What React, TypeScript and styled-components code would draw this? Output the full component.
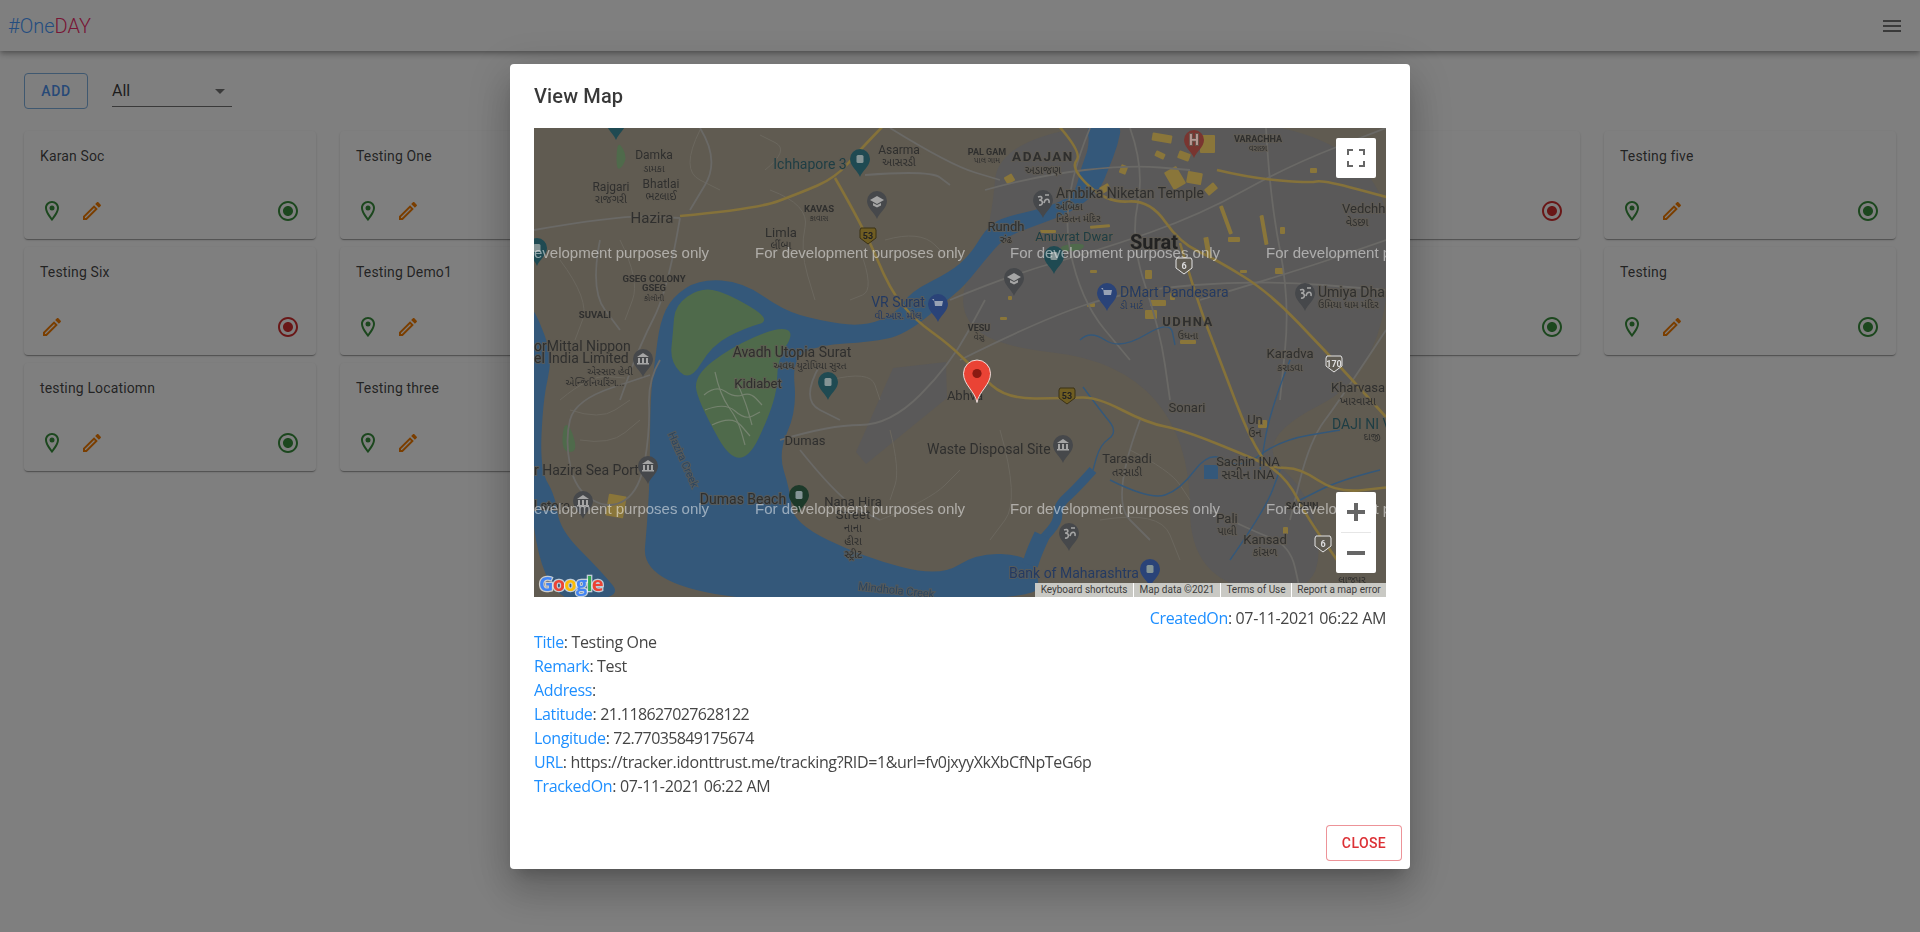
import * as React from "react"
import styled, { createGlobalStyle } from "styled-components"

const GlobalStyle = createGlobalStyle`
  html, body {
    margin: 0;
    height: 100%;
    overflow: hidden;
    background: #fff;
    font-family: Roboto, "Liberation Sans", sans-serif;
  }
  * {
    box-sizing: border-box;
  }
`

const AppBar = styled.header`
  height: 51px;
  display: flex;
  align-items: center;
  justify-content: space-between;
  padding: 0 16px 0 8px;
  background: #fff;
  box-shadow: 0 2px 4px -1px rgba(0, 0, 0, 0.2), 0 4px 5px 0 rgba(0, 0, 0, 0.14),
    0 1px 10px 0 rgba(0, 0, 0, 0.12);
`

const Logo = styled.div`
  font-size: 20px;
  font-weight: 300;
  color: #4a9bff;
  span {
    color: #f02d6a;
  }
`

const Main = styled.main`
  padding: 22px 24px;
`

const Toolbar = styled.div`
  display: flex;
  align-items: center;
  gap: 24px;
  margin-bottom: 22px;
`

const AddButton = styled.button`
  width: 64px;
  height: 36px;
  border: 1px solid #7fb0e0;
  border-radius: 4px;
  background: transparent;
  color: #4f93ee;
  font-family: Roboto, sans-serif;
  font-size: 14px;
  font-weight: 500;
  letter-spacing: 0.6px;
`

const SelectBox = styled.div`
  position: relative;
  width: 120px;
  height: 32px;
  display: flex;
  align-items: center;
  font-size: 16px;
  color: rgba(0, 0, 0, 0.78);
  border-bottom: 1px solid rgba(0, 0, 0, 0.55);
  svg {
    position: absolute;
    right: 0;
    top: 4px;
    fill: rgba(0, 0, 0, 0.54);
  }
`

const CardGrid = styled.div`
  display: grid;
  grid-template-columns: repeat(6, 292px);
  gap: 8px 24px;
`

const Card = styled.div`
  height: 108px;
  padding: 16px;
  display: flex;
  flex-direction: column;
  justify-content: space-between;
  background: #fff;
  border-radius: 4px;
  box-shadow: 0 2px 1px -1px rgba(0, 0, 0, 0.2), 0 1px 1px 0 rgba(0, 0, 0, 0.14),
    0 1px 3px 0 rgba(0, 0, 0, 0.12);
`

const CardTitle = styled.div`
  font-size: 14px;
  line-height: 18px;
  height: 20px;
  letter-spacing: 0.14px;
  color: rgba(0, 0, 0, 0.74);
`

const CardActions = styled.div`
  display: flex;
  align-items: center;
  gap: 16px;
  height: 24px;
`

const Status = styled.span`
  margin-left: auto;
  height: 24px;
`

const Icon = styled.svg<{ $color: string }>`
  display: block;
  width: 24px;
  height: 24px;
  fill: ${p => p.$color};
`

const Overlay = styled.div`
  position: fixed;
  inset: 0;
  display: flex;
  align-items: center;
  justify-content: center;
  padding-top: 1px;
  background: rgba(0, 0, 0, 0.5);
`

const Dialog = styled.div`
  width: 900px;
  background: #fff;
  border-radius: 4px;
  box-shadow: 0 11px 15px -7px rgba(0, 0, 0, 0.2),
    0 24px 38px 3px rgba(0, 0, 0, 0.14), 0 9px 46px 8px rgba(0, 0, 0, 0.12);
`

const DialogTitle = styled.h2`
  margin: 0;
  padding: 16px 24px;
  font-size: 20px;
  font-weight: 500;
  line-height: 32px;
  letter-spacing: 0.15px;
  color: rgba(0, 0, 0, 0.78);
`

const DialogContent = styled.div`
  padding: 0 24px 19px;
`

const MapFrame = styled.div`
  position: relative;
  height: 469px;
  overflow: hidden;
  svg {
    display: block;
  }
`

const MapButton = styled.button`
  position: absolute;
  right: 10px;
  top: 10px;
  width: 40px;
  height: 40px;
  padding: 0;
  border: 0;
  border-radius: 2px;
  background: #fff;
  display: flex;
  align-items: center;
  justify-content: center;
`

const ZoomBox = styled.div`
  position: absolute;
  right: 10px;
  bottom: 24px;
  width: 40px;
  height: 81px;
  background: #fff;
  border-radius: 2px;
  display: flex;
  flex-direction: column;
  align-items: center;
  justify-content: space-between;
  padding: 11px 0;
  hr {
    width: 30px;
    margin: 0;
    border: 0;
    border-top: 1px solid #e6e6e6;
  }
`

const CreditBar = styled.div`
  position: absolute;
  right: 0;
  bottom: 0;
  height: 14px;
  display: flex;
  background: #c9c9c4;
`

const Credit = styled.span<{ $w: number }>`
  width: ${p => p.$w}px;
  font-family: Roboto, sans-serif;
  font-size: 10px;
  line-height: 14px;
  text-align: center;
  color: #3c3c3c;
  white-space: nowrap;
  & + & {
    border-left: 1px solid #fff;
  }
`

const Details = styled.div`
  font-family: "Open Sans", sans-serif;
  font-size: 16px;
  line-height: 24px;
  letter-spacing: -0.35px;
  color: #454545;
`

const CreatedRow = styled.div`
  margin-top: 9px;
  text-align: right;
`

const Key = styled.span`
  color: #1e8fff;
`

const Value = styled.span<{ $tight?: boolean }>`
  letter-spacing: ${p => (p.$tight ? "-0.6px" : "inherit")};
`

const DialogActions = styled.div`
  display: flex;
  justify-content: flex-end;
  padding: 8px;
`

const CloseButton = styled.button`
  width: 76px;
  height: 36px;
  border: 1px solid rgba(220, 40, 50, 0.5);
  border-radius: 4px;
  background: #fff;
  color: #dc3035;
  font-family: Roboto, sans-serif;
  font-size: 14px;
  font-weight: 500;
  letter-spacing: 0.4px;
`

const MapText = styled.text<{ $size: number; $weight?: number; $color?: string; $ls?: number }>`
  font-family: Roboto, "Noto Sans Gujarati", "Noto Sans", sans-serif;
  font-size: ${p => p.$size}px;
  font-weight: ${p => p.$weight || 400};
  letter-spacing: ${p => p.$ls || 0}px;
  fill: ${p => p.$color || "#2f2f2e"};
  stroke: rgba(96, 91, 81, 0.75);
  stroke-width: 2px;
  paint-order: stroke;
`

const Watermark = styled.text`
  font-family: "Liberation Sans", Arial, sans-serif;
  font-size: 15px;
  fill: rgba(255, 255, 255, 0.5);
`

const GoogleMark = styled.text`
  font-family: "Open Sans", Roboto, sans-serif;
  font-size: 20px;
  font-weight: 700;
  letter-spacing: -0.8px;
  stroke: rgba(255, 255, 255, 0.7);
  stroke-width: 2.5px;
  paint-order: stroke;
`

const smooth = (pts: number[][], closed = true) => {
  const mid = (a: number[], b: number[]) => [(a[0] + b[0]) / 2, (a[1] + b[1]) / 2]
  if (closed) {
    let d = ""
    pts.forEach((p, i) => {
      const next = pts[(i + 1) % pts.length]
      const m = mid(p, next)
      if (i === 0) d += `M${mid(pts[pts.length - 1], p).join(" ")} `
      d += `Q${p.join(" ")} ${m.join(" ")} `
    })
    return d + "Z"
  }
  let d = `M${pts[0].join(" ")} `
  for (let i = 1; i < pts.length - 1; i++) {
    d += `Q${pts[i].join(" ")} ${mid(pts[i], pts[i + 1]).join(" ")} `
  }
  return d + `L${pts[pts.length - 1].join(" ")}`
}

const LAND = "#605b51"
const WATER = "#34587a"
const GREEN = "#4f6a4b"
const URBAN = "#5a5959"
const HIGHWAY = "#85723a"
const PATCH = "#8a763a"
const STREET = "#6a6966"
const TRACK = "#6b675e"

const waterAreas = [
  [[534, 310], [545, 335], [552, 360], [543, 400], [540, 470], [555, 495], [560, 530], [600, 570], [625, 600], [530, 600], [530, 310]],
  [
    [660, 322], [672, 297], [700, 279], [743, 282], [783, 310], [817, 320], [863, 327], [897, 313], [910, 292],
    [950, 272], [970, 255], [985, 230], [1000, 218], [1045, 208], [1075, 195], [1080, 170], [1090, 145], [1086, 122],
    [1122, 122], [1118, 145], [1108, 170], [1100, 190], [1072, 212], [1040, 224], [1005, 237], [985, 260], [965, 285],
    [950, 298], [905, 335], [870, 342], [820, 345], [792, 358], [797, 410], [778, 453], [790, 490], [793, 523],
    [863, 557], [940, 577], [977, 553], [1025, 555], [1040, 575], [1035, 602], [640, 602], [650, 493], [650, 400], [655, 360],
  ],
]

const greenAreas = [
  [[673, 332], [675, 305], [700, 288], [725, 292], [773, 320], [745, 328], [712, 345], [690, 382], [670, 362]],
  [[730, 348], [777, 327], [795, 332], [777, 360], [777, 400], [740, 477], [697, 400], [695, 375]],
  [[563, 425], [570, 425], [578, 452], [562, 452]],
  [[618, 140], [628, 158], [618, 172], [616, 160]],
]

const urbanAreas = [
  [[1000, 120], [1390, 120], [1390, 370], [1250, 440], [1317, 500], [1320, 600], [1190, 580], [1190, 440], [1120, 360], [985, 345], [955, 300], [990, 240]],
]

// the airstrip is a hard edged block, not a blob
const AIRSTRIP = "M893 368L946 362L947 398L866 464L856 452Z"

const islandTracks = [
  [[704, 395], [716, 385], [735, 398], [750, 392], [762, 405]],
  [[705, 410], [725, 402], [745, 420], [760, 412]],
  [[712, 425], [732, 415], [750, 436]],
  [[715, 372], [720, 395], [738, 420], [745, 445]],
  [[735, 378], [745, 400], [752, 425]],
]

const highways = [
  [[680, 216], [757, 209], [800, 193], [835, 178], [860, 150], [885, 124]],
  [[835, 178], [865, 230], [890, 290], [915, 320], [950, 345], [977, 372], [1007, 399], [1067, 398], [1097, 397], [1147, 423], [1183, 430], [1250, 457], [1273, 468], [1300, 468], [1337, 493], [1390, 487]],
  [[1057, 124], [1083, 153], [1070, 168], [1107, 203], [1150, 200], [1180, 243], [1217, 260], [1270, 293], [1327, 353], [1345, 372], [1386, 417]],
  [[1217, 170], [1250, 178], [1310, 183], [1323, 180], [1390, 198]],
  [[1180, 243], [1197, 300], [1217, 353], [1257, 457], [1288, 480], [1307, 517], [1337, 560]],
]

const streets = [
  [[534, 230], [620, 215], [680, 218]],
  [[680, 218], [668, 290], [640, 345], [620, 400]],
  [[600, 240], [590, 290], [620, 330]],
  [[660, 360], [648, 380], [650, 430], [640, 490], [610, 510], [575, 490], [565, 440], [575, 400], [650, 375]],
  [[950, 300], [1010, 275], [1100, 250], [1200, 215], [1290, 165], [1386, 128]],
  [[960, 360], [1040, 320], [1130, 290], [1260, 280], [1386, 290]],
  [[985, 190], [1040, 175], [1130, 165], [1190, 170]],
  [[1090, 128], [1060, 200], [1080, 300], [1130, 360]],
  [[1130, 128], [1145, 170], [1130, 240], [1160, 330], [1170, 400]],
  [[1266, 128], [1270, 200], [1290, 300], [1280, 400]],
  [[1200, 300], [1300, 270], [1386, 240]],
  [[1386, 330], [1340, 400], [1310, 440], [1290, 520]],
  [[780, 440], [830, 425], [890, 425], [950, 365], [985, 300]],
  [[800, 450], [840, 500], [880, 520]],
  [[820, 365], [800, 400], [840, 420]],
  [[1210, 510], [1250, 530], [1290, 545], [1300, 590]],
  [[1140, 420], [1110, 500], [1150, 540]],
  [[890, 128], [950, 165], [1000, 180]],
  [[700, 128], [720, 160], [690, 210]],
  [[865, 175], [930, 170], [950, 185]],
]

const tracks = [
  [[560, 260], [590, 300], [575, 340]],
  [[620, 240], [640, 280], [625, 320]],
  [[700, 130], [680, 170], [720, 190]],
  [[765, 170], [790, 150], [760, 135]],
  [[770, 190], [810, 205], [800, 250], [815, 300]],
  [[860, 250], [875, 290], [850, 300]],
  [[885, 240], [920, 230], [950, 260]],
  [[570, 410], [600, 420], [630, 400]],
  [[580, 440], [610, 445], [640, 420]],
  [[560, 400], [590, 375], [625, 378]],
  [[830, 380], [870, 370], [880, 400]],
  [[890, 430], [900, 470], [890, 500]],
  [[880, 520], [930, 500], [960, 470]],
  [[1000, 430], [1020, 500], [990, 540]],
  [[1100, 520], [1160, 510], [1180, 560]],
  [[1130, 450], [1170, 470], [1190, 500]],
]

const streams = [
  [[1083, 387], [1100, 410], [1118, 432], [1100, 445], [1093, 470]],
  [[1290, 360], [1270, 410], [1260, 470]],
  [[1110, 480], [1150, 500], [1180, 490], [1210, 450], [1240, 470], [1280, 440], [1340, 430]],
  [[1230, 560], [1265, 510], [1280, 470]],
  [[1080, 340], [1090, 330], [1120, 350], [1170, 320], [1175, 345]],
  [[1380, 470], [1340, 480], [1300, 500]],
]

// x, y, width, height, rotation
const patches = [
  [1152, 134, 20, 8, 10], [1168, 168, 14, 20, -30], [1187, 172, 15, 12, 10], [1200, 135, 15, 18, 0],
  [1178, 152, 12, 8, 20], [1155, 152, 10, 6, 25], [1205, 185, 12, 8, -40], [1100, 185, 10, 7, -30],
  [1005, 175, 9, 8, -30], [1224, 205, 4, 30, -20], [1262, 215, 4, 30, -10], [1275, 268, 9, 6, 0],
  [1228, 237, 12, 5, 0], [1280, 227, 5, 7, 0], [1310, 168, 7, 5, 0], [1150, 300, 16, 6, 0],
  [1145, 310, 12, 9, 0], [1087, 303, 8, 4, 0], [1205, 237, 5, 20, -10], [1120, 165, 7, 9, 20],
  [1240, 270, 7, 3, 0], [1090, 225, 20, 3, -5], [1040, 230, 16, 3, 0], [1145, 270, 7, 9, 0],
  [1000, 317, 7, 3, 0], [1170, 293, 5, 7, 0], [1090, 270, 7, 3, 0], [1258, 420, 9, 8, 0], [1283, 527, 5, 7, 0],
  [1008, 296, 4, 4, 0], [1180, 340, 16, 4, 0], [607, 495, 18, 22, 10],
]

type PinProps = { x: number; tip: number; color: string; kind?: "dot" | "museum" | "cap" | "om" | "shop" | "H" }

const Pin = ({ x, tip, color, kind = "dot" }: PinProps) => {
  const cy = tip - 18
  return (
    <g>
      <path
        d={`M${x} ${tip}C${x - 2} ${tip - 6} ${x - 10} ${tip - 11} ${x - 10} ${cy}a10 10 0 1 1 20 0C${x + 10} ${tip - 11} ${x + 2} ${tip - 6} ${x} ${tip}Z`}
        fill={color}
      />
      {kind === "museum" && (
        <path
          d={`M${x - 6} ${cy - 2}l6 -4 6 4zM${x - 5} ${cy - 1}h2v5h-2zM${x - 1} ${cy - 1}h2v5h-2zM${x + 3} ${cy - 1}h2v5h-2zM${x - 6} ${cy + 4}h12v1.5h-12z`}
          fill="#a5a5a5"
        />
      )}
      {kind === "cap" && <path d={`M${x - 7} ${cy - 1}l7 -4 7 4 -7 4zM${x - 4} ${cy + 2}v2.5l4 2 4 -2v-2.5l-4 2z`} fill="#a5a5a5" />}
      {kind === "om" && <path d={`M${x - 5} ${cy - 3}c5 -2 5 3 1 3c5 0 4 6 0 5M${x + 1} ${cy + 3}c1 -5 6 -5 5 0M${x + 2} ${cy - 5}h4`} fill="none" stroke="#a5a5a5" strokeWidth="1.6" />}
      {kind === "shop" && <path d={`M${x - 6} ${cy - 5}h2l1 7h7l1 -5h-9z`} fill="#98a2b4" />}
      {kind === "dot" && <rect x={x - 3.5} y={cy - 4} width={7} height={8} rx={1.5} fill="#849495" />}
      {kind === "H" && <MapText x={x} y={cy + 5} $size={14} $weight={700} $color="#b59792" textAnchor="middle">H</MapText>}
    </g>
  )
}

const Shield = ({ x, y, label, light }: { x: number; y: number; label: string; light?: boolean }) => (
  <g>
    <path
      d={`M${x - 7} ${y - 8}h14l1 2v8l-8 6 -8 -6v-8z`}
      fill={light ? "#5f5b52" : "#6f5d22"}
      stroke={light ? "#e4e4e4" : "#3b3215"}
      strokeWidth="1"
    />
    <text x={x} y={y + 3} textAnchor="middle" fontSize="9" fontWeight="700" fontFamily="Roboto" fill={light ? "#ddd" : "#222"}>
      {label}
    </text>
  </g>
)

const TEAL = "#1d3d44"
const NAVY = "#243a62"

const labels: { t: string; x: number; y: number; s?: number; w?: number; c?: string; a?: "middle" | "start" | "end"; ls?: number; r?: number }[] = [
  { t: "Damka", x: 654, y: 159 }, { t: "ડામકા", x: 654, y: 172, s: 10 },
  { t: "Rajgari", x: 611, y: 191 }, { t: "રાજગરી", x: 611, y: 203, s: 11 },
  { t: "Bhatlai", x: 661, y: 188 }, { t: "ભટલાઈ", x: 661, y: 200, s: 11 },
  { t: "Hazira", x: 652, y: 223, s: 15 },
  { t: "Ichhapore 3", x: 810, y: 169, s: 14, c: TEAL },
  { t: "Asarma", x: 899, y: 154 }, { t: "આસરડી", x: 899, y: 166, s: 11 },
  { t: "KAVAS", x: 819, y: 212, s: 9.5, w: 700 }, { t: "કાવાસ", x: 819, y: 221, s: 8 },
  { t: "Limla", x: 781, y: 237, s: 13 }, { t: "લીંબા", x: 781, y: 249, s: 11 },
  { t: "GSEG COLONY", x: 654, y: 282, s: 9.5, w: 700 }, { t: "GSEG", x: 654, y: 291, s: 9.5, w: 700 }, { t: "કોલોની", x: 654, y: 301, s: 8 },
  { t: "SUVALI", x: 595, y: 318, s: 9.5, w: 700 },
  { t: "VR Surat", x: 898, y: 307, s: 14, c: NAVY }, { t: "વી.આર. મોલ", x: 898, y: 319, s: 10, c: NAVY },
  { t: "orMittal Nippon", x: 534, y: 351, s: 14, a: "start" }, { t: "el India Limited", x: 534, y: 363, s: 14, a: "start" },
  { t: "એસ્સાર હેવી", x: 610, y: 375, s: 10 }, { t: "એન્જિનિયરિંગ...", x: 595, y: 386, s: 10 },
  { t: "Avadh Utopia Surat", x: 792, y: 357, s: 14 }, { t: "અવધ યુટોપિયા સુરત", x: 810, y: 369, s: 10 },
  { t: "Kidiabet", x: 758, y: 388, s: 13 },
  { t: "Dumas", x: 805, y: 445, s: 13 },
  { t: "Waste Disposal Site", x: 927, y: 454, s: 14, a: "start" },
  { t: "r Hazira Sea Port", x: 534, y: 475, s: 14, a: "start" },
  { t: "l store", x: 534, y: 510, s: 13, a: "start" },
  { t: "Dumas Beach", x: 743, y: 504, s: 14 },
  { t: "Nana Hira", x: 853, y: 506, s: 13 }, { t: "Street", x: 853, y: 519, s: 13 },
  { t: "નાના", x: 853, y: 532, s: 11 }, { t: "હીરા", x: 853, y: 545, s: 11 }, { t: "સ્ટ્રીટ", x: 853, y: 558, s: 11 },
  { t: "Hazira Creek", x: 668, y: 434, s: 10.5, a: "start", c: "#2b4560", r: 66 },
  { t: "Mindhola Creek", x: 858, y: 590, s: 11, a: "start", c: "#2b4560", r: 6 },
  { t: "PAL GAM", x: 987, y: 155, s: 9, w: 700 }, { t: "પાલ ગામ", x: 987, y: 163, s: 8 },
  { t: "ADAJAN", x: 1043, y: 161, s: 13.5, w: 700, ls: 1.5 }, { t: "અડાજણ", x: 1043, y: 174, s: 11 },
  { t: "Ambika Niketan Temple", x: 1056, y: 198, s: 14, a: "start" }, { t: "અંબિકા", x: 1056, y: 210, s: 10, a: "start" }, { t: "નિકેતન મંદિર", x: 1056, y: 222, s: 10, a: "start" },
  { t: "Rundh", x: 1006, y: 231, s: 13 }, { t: "રુંઢ", x: 1006, y: 243, s: 10 },
  { t: "Anuvrat Dwar", x: 1074, y: 241, s: 13, c: TEAL },
  { t: "Surat", x: 1154, y: 249, s: 20, w: 700, c: "#222" },
  { t: "VARACHHA", x: 1258, y: 142, s: 9, w: 700 }, { t: "વરાછા", x: 1258, y: 151, s: 8 },
  { t: "Vedchha", x: 1342, y: 213, s: 13, a: "start" }, { t: "વેડછા", x: 1357, y: 226, s: 11 },
  { t: "VESU", x: 979, y: 331, s: 9, w: 700 }, { t: "વેસુ", x: 979, y: 340, s: 8 },
  { t: "DMart Pandesara", x: 1120, y: 297, s: 14, a: "start", c: NAVY }, { t: "ડી માર્ટ", x: 1120, y: 309, s: 10, a: "start", c: NAVY },
  { t: "UDHNA", x: 1188, y: 326, s: 13, w: 700, ls: 1.5 }, { t: "ઉધના", x: 1188, y: 339, s: 10 },
  { t: "Umiya Dham", x: 1318, y: 297, s: 14, a: "start" }, { t: "ઉમિયા ધામ મંદિર", x: 1318, y: 308, s: 10, a: "start" },
  { t: "Karadva", x: 1290, y: 358, s: 13 }, { t: "કરાડવા", x: 1290, y: 371, s: 10 },
  { t: "Abhva", x: 965, y: 400, s: 13 },
  { t: "Sonari", x: 1187, y: 412, s: 13 },
  { t: "Un", x: 1255, y: 424, s: 13 }, { t: "ઉન", x: 1255, y: 437, s: 11 },
  { t: "Tarasadi", x: 1127, y: 463, s: 13 }, { t: "તરસાડી", x: 1127, y: 476, s: 11 },
  { t: "Sachin INA", x: 1248, y: 466, s: 13 }, { t: "સચીન INA", x: 1248, y: 479, s: 13 },
  { t: "DAJI NI V", x: 1332, y: 429, s: 14, a: "start", c: TEAL }, { t: "દાજી", x: 1372, y: 440, s: 10 },
  { t: "Kharvasa", x: 1358, y: 392, s: 13 }, { t: "ખારવાસા", x: 1358, y: 405, s: 11 },
  { t: "SACHIN", x: 1302, y: 509, s: 9, w: 700 },
  { t: "Pali", x: 1227, y: 523, s: 13 }, { t: "પાલી", x: 1227, y: 535, s: 11 },
  { t: "Kansad", x: 1265, y: 544, s: 13 }, { t: "કાંસળ", x: 1265, y: 556, s: 11 },
  { t: "Bank of Maharashtra", x: 1009, y: 578, s: 14, a: "start", c: NAVY },
  { t: "લાજપુર", x: 1352, y: 583, s: 10 },
]

const MapDrawing = () => (
  <svg width="852" height="469" viewBox="534 128 852 469">
    <rect x="534" y="128" width="852" height="469" fill={LAND} />
    {urbanAreas.map((a, i) => (
      <path key={i} d={smooth(a)} fill={URBAN} />
    ))}
    <path d={AIRSTRIP} fill={URBAN} />
    {waterAreas.map((a, i) => (
      <path key={i} d={smooth(a)} fill={WATER} />
    ))}
    {greenAreas.map((a, i) => (
      <path key={i} d={smooth(a)} fill={GREEN} />
    ))}
    <g fill="none" stroke="#75836f" strokeWidth="1.2">
      {islandTracks.map((s, i) => (
        <path key={i} d={smooth(s, false)} />
      ))}
    </g>
    <path d={smooth([[1060, 245], [1085, 243], [1083, 250], [1062, 252]])} fill={GREEN} />
    {patches.map(([x, y, w, h, r], i) => (
      <rect key={i} x={x} y={y} width={w} height={h} rx={1} fill={PATCH} transform={`rotate(${r} ${x + w / 2} ${y + h / 2})`} />
    ))}
    <g fill="none" stroke={TRACK} strokeWidth="1">
      {tracks.map((s, i) => (
        <path key={i} d={smooth(s, false)} />
      ))}
    </g>
    <g fill="none" stroke={STREET} strokeWidth="1.8">
      {streets.map((s, i) => (
        <path key={i} d={smooth(s, false)} />
      ))}
    </g>
    <g fill="none" stroke={WATER} strokeWidth="1.4">
      {streams.map((s, i) => (
        <path key={i} d={smooth(s, false)} />
      ))}
    </g>
    <path d={smooth([[1093, 470], [1075, 490], [1058, 505], [1058, 522], [1042, 540]], false)} fill="none" stroke={WATER} strokeWidth="9" />
    <path d={smooth([[1042, 535], [1035, 550], [1030, 565]], false)} fill="none" stroke={WATER} strokeWidth="16" />
    <rect x="1204" y="465" width="14" height="14" fill="#34587a" />
    <g fill="none" stroke={HIGHWAY} strokeWidth="2.6" strokeLinejoin="round">
      {highways.map((s, i) => (
        <path key={i} d={smooth(s, false)} />
      ))}
    </g>
    {labels.map(l => (
      <MapText
        key={l.t + l.x}
        x={l.x}
        y={l.y}
        $size={l.s || 12}
        $weight={l.w}
        $color={l.c}
        $ls={l.ls}
        textAnchor={l.a || "middle"}
        transform={l.r ? `rotate(${l.r} ${l.x} ${l.y})` : undefined}
      >
        {l.t}
      </MapText>
    ))}
    <Shield x={868} y={236} label="53" />
    <Shield x={1067} y={396} label="53" />
    <Shield x={1184} y={266} label="6" light />
    <Shield x={1323} y={544} label="6" light />
    <Shield x={1334} y={364} label="170" light />
    <Pin x={616} tip={140} color="#1f4a52" />
    <Pin x={860} tip={177} color="#1f4a52" />
    <Pin x={877} tip={219} color="#46484b" kind="cap" />
    <Pin x={537} tip={266} color="#1f4a52" />
    <Pin x={938} tip={322} color="#2a4378" kind="shop" />
    <Pin x={643} tip={377} color="#46484b" kind="museum" />
    <Pin x={1194} tip={158} color="#793530" kind="H" />
    <Pin x={1043} tip={218} color="#46484b" kind="om" />
    <Pin x={1054} tip={274} color="#1f4a52" />
    <Pin x={1014} tip={296} color="#46484b" kind="cap" />
    <Pin x={1107} tip={311} color="#2a4378" kind="shop" />
    <Pin x={1305} tip={311} color="#46484b" kind="om" />
    <Pin x={828} tip={400} color="#1f4a52" />
    <Pin x={648} tip={484} color="#46484b" kind="museum" />
    <Pin x={583} tip={519} color="#46484b" kind="museum" />
    <Pin x={799} tip={513} color="#1d3a2a" />
    <Pin x={1063} tip={463} color="#46484b" kind="museum" />
    <Pin x={1069} tip={551} color="#46484b" kind="om" />
    <Pin x={1150} tip={587} color="#2a4378" />
    {[258, 514].map(y =>
      [499, 755, 1010, 1266].map(x => (
        <Watermark key={`${x}-${y}`} x={x} y={y}>
          For development purposes only
        </Watermark>
      ))
    )}
    <path
      d="M977 402.5C975 391 963.5 385 963.5 373.5a13.5 13.5 0 1 1 27 0C990.5 385 979 391 977 402.5Z"
      fill="#ea4335"
      stroke="#fff"
      strokeWidth="0.8"
    />
    <circle cx="977" cy="373.5" r="4.6" fill="#8a1a12" />
    <GoogleMark x="539" y="591">
      <tspan fill="#4285f4">G</tspan>
      <tspan fill="#ea4335">o</tspan>
      <tspan fill="#fbbc05">o</tspan>
      <tspan fill="#4285f4">g</tspan>
      <tspan fill="#34a853">l</tspan>
      <tspan fill="#ea4335">e</tspan>
    </GoogleMark>
  </svg>
)

const GREEN_ICON = "#388e3c"
const RED_ICON = "#d32f2f"
const ORANGE_ICON = "#f57c00"

const PinIcon = () => (
  <Icon $color={GREEN_ICON} viewBox="0 0 24 24">
    <path d="M12 2C8.13 2 5 5.13 5 9c0 5.25 7 13 7 13s7-7.75 7-13c0-3.87-3.13-7-7-7zM7 9c0-2.76 2.24-5 5-5s5 2.24 5 5c0 2.88-2.88 7.19-5 9.88C9.92 16.21 7 11.85 7 9z" />
    <circle cx="12" cy="9" r="2.5" />
  </Icon>
)

const EditIcon = () => (
  <Icon $color={ORANGE_ICON} viewBox="0 0 24 24">
    <path d="M14.06 9.02l.92.92L5.92 19H5v-.92l9.06-9.06M17.66 3c-.25 0-.51.1-.7.29l-1.83 1.83 3.75 3.75 1.83-1.83c.39-.39.39-1.02 0-1.41l-2.34-2.34c-.2-.2-.45-.29-.71-.29zm-3.6 3.19L3 17.25V21h3.75L17.81 9.94l-3.75-3.75z" />
  </Icon>
)

const StatusIcon = ({ on }: { on: boolean }) => (
  <Icon $color={on ? GREEN_ICON : RED_ICON} viewBox="0 0 24 24">
    <path d="M12 7c-2.76 0-5 2.24-5 5s2.24 5 5 5 5-2.24 5-5-2.24-5-5-5zm0-5C6.48 2 2 6.48 2 12s4.48 10 10 10 10-4.48 10-10S17.52 2 12 2zm0 18c-4.42 0-8-3.58-8-8s3.58-8 8-8 8 3.58 8 8-3.58 8-8 8z" />
  </Icon>
)

const cards = [
  { title: "Karan Soc", pin: true, on: true },
  { title: "Testing One", pin: true, on: true },
  { title: "", pin: false, on: true, hidden: true },
  { title: "", pin: false, on: true, hidden: true },
  { title: "", pin: false, on: false, hidden: true },
  { title: "Testing five", pin: true, on: true },
  { title: "Testing Six", pin: false, on: false },
  { title: "Testing Demo1", pin: true, on: true },
  { title: "", pin: false, on: true, hidden: true },
  { title: "", pin: false, on: true, hidden: true },
  { title: "", pin: false, on: true, hidden: true },
  { title: "Testing", pin: true, on: true },
  { title: "testing Locatiomn", pin: true, on: true },
  { title: "Testing three", pin: true, on: true },
]

const details = [
  ["Title", "Testing One"],
  ["Remark", "Test"],
  ["Address", ""],
  ["Latitude", "21.118627027628122", "tight"],
  ["Longitude", "72.77035849175674", "tight"],
  ["URL", "https://tracker.idonttrust.me/tracking?RID=1&url=fv0jxyyXkXbCfNpTeG6p"],
  ["TrackedOn", "07-11-2021 06:22 AM"],
]

const App = () => (
  <>
    <GlobalStyle />
    <AppBar>
      <Logo>
        #One<span>DAY</span>
      </Logo>
      <Icon $color="rgba(0,0,0,0.54)" viewBox="0 0 24 24">
        <path d="M3 18h18v-2H3v2zm0-5h18v-2H3v2zm0-7v2h18V6H3z" />
      </Icon>
    </AppBar>
    <Main>
      <Toolbar>
        <AddButton>ADD</AddButton>
        <SelectBox>
          All
          <svg width="24" height="24" viewBox="0 0 24 24">
            <path d="M7 10l5 5 5-5z" />
          </svg>
        </SelectBox>
      </Toolbar>
      <CardGrid>
        {cards.map((c, i) => (
          <Card key={i}>
            <CardTitle>{c.title}</CardTitle>
            <CardActions>
              {c.pin && <PinIcon />}
              {!c.hidden && <EditIcon />}
              <Status>
                <StatusIcon on={c.on} />
              </Status>
            </CardActions>
          </Card>
        ))}
      </CardGrid>
    </Main>
    <Overlay>
      <Dialog>
        <DialogTitle>View Map</DialogTitle>
        <DialogContent>
          <MapFrame>
            <MapDrawing />
            <MapButton>
              <svg width="18" height="18" viewBox="0 0 18 18" fill="none" stroke="#666" strokeWidth="2">
                <path d="M1 6V1h5M12 1h5v5M17 12v5h-5M6 17H1v-5" />
              </svg>
            </MapButton>
            <ZoomBox>
              <svg width="18" height="18" viewBox="0 0 18 18" fill="#666">
                <path d="M7 0h4v7h7v4h-7v7H7v-7H0V7h7z" />
              </svg>
              <hr />
              <svg width="18" height="18" viewBox="0 0 18 18" fill="#666">
                <path d="M0 7h18v4H0z" />
              </svg>
            </ZoomBox>
            <CreditBar>
              <Credit $w={98}>Keyboard shortcuts</Credit>
              <Credit $w={87}>Map data ©2021</Credit>
              <Credit $w={71}>Terms of Use</Credit>
              <Credit $w={95}>Report a map error</Credit>
            </CreditBar>
          </MapFrame>
          <Details>
            <CreatedRow>
              <Key>CreatedOn</Key>: 07-11-2021 06:22 AM
            </CreatedRow>
            {details.map(([k, v, tight]) => (
              <div key={k}>
                <Key>{k}</Key>: <Value $tight={!!tight}>{v}</Value>
              </div>
            ))}
          </Details>
        </DialogContent>
        <DialogActions>
          <CloseButton>CLOSE</CloseButton>
        </DialogActions>
      </Dialog>
    </Overlay>
  </>
)

export default App
